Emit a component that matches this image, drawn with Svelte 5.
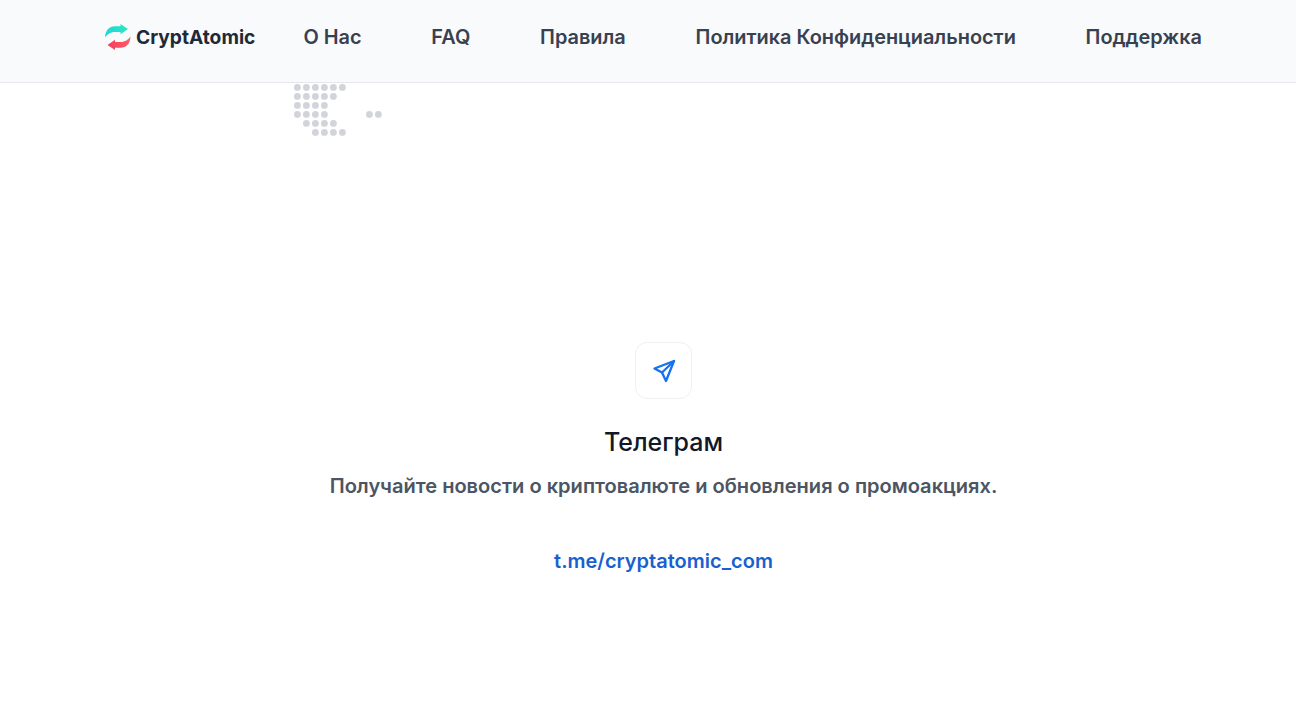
<script>
  const links = ['О Нас', 'FAQ', 'Правила', 'Политика Конфиденциальности', 'Поддержка'];
  const rows = [
    [0, 1, 2, 3, 4, 5],
    [0, 1, 2, 3, 4],
    [0, 1, 2, 3],
    [0, 1, 2, 3, 8, 9],
    [1, 2, 3, 4],
    [2, 3, 4, 5]
  ];
  const swoosh = 'M23 5L15.500 0V2.200H10C4 2.200 0.300 6.500 0 13.500C2 10.500 5.500 8 10 8H15.500V10.200Z';
</script>

<header class="bar">
  <a class="logo" href="#top">
    <svg width="26" height="26" viewBox="0 0 26 26" aria-hidden="true">
      <defs>
        <linearGradient id="g1" x1="0" y1="0" x2="1" y2="0"><stop offset="0" stop-color="#1fd6dc" /><stop offset="1" stop-color="#2ee6bd" /></linearGradient>
        <linearGradient id="g2" x1="0" y1="0" x2="1" y2="0"><stop offset="0" stop-color="#ff5b66" /><stop offset="1" stop-color="#f43f5e" /></linearGradient>
      </defs>
      <path d={swoosh} fill="url(#g1)" />
      <path d={swoosh} fill="url(#g2)" transform="rotate(180 12.750 13)" />
    </svg>
    <span>CryptAtomic</span>
  </a>
  <nav class="links">
    {#each links as link}
      <a href="#top">{link}</a>
    {/each}
  </nav>
</header>

<svg class="dots" width="90" height="54" viewBox="0 0 90 54" aria-hidden="true">
  {#each rows as row, y}
    {#each row as x}
      <circle cx={3.4 + x * 9} cy={3.4 + y * 9} r="3.400" fill="#d1d5db" />
    {/each}
  {/each}
</svg>

<main class="content">
  <div class="icon">
    <svg width="26" height="26" viewBox="0 0 26 26" fill="none" stroke="#1573ee" stroke-width="2.300" stroke-linejoin="round" stroke-linecap="round" aria-hidden="true">
      <path d="M23 3L3.500 10.500L11 14.500L15 23Z" />
      <path d="M11 14.500L23 3" />
    </svg>
  </div>
  <h1>Телеграм</h1>
  <p>Получайте новости о криптовалюте и обновления о промоакциях.</p>
  <a class="tg" href="#top">t.me/cryptatomic_com</a>
</main>

<style>
  :global(body) {
    margin: 0;
    background: #fff;
    font-family: Inter, "Noto Sans", sans-serif;
  }
  a {
    text-decoration: none;
  }
  .bar {
    display: flex;
    align-items: center;
    gap: 48px;
    height: 74px;
    padding: 0 0 8px 105px;
    background: #f9fafb;
    border-bottom: 1px solid #e5e7eb;
  }
  .logo {
    display: flex;
    align-items: center;
    gap: 5px;
    font-size: 19.200px;
    font-weight: 700;
    color: #1f2937;
  }
  .links {
    display: flex;
    gap: 69.800px;
  }
  .links a {
    font-size: 19.900px;
    font-weight: 600;
    color: #374151;
  }
  .dots {
    position: absolute;
    left: 294px;
    top: 84px;
  }
  .content {
    display: flex;
    flex-direction: column;
    align-items: center;
    padding: 259px 0 0 31px;
  }
  .icon {
    display: flex;
    align-items: center;
    justify-content: center;
    width: 57px;
    height: 57px;
    box-sizing: border-box;
    border: 1px solid #f0f0f2;
    border-radius: 12px;
  }
  h1 {
    margin: 27px 0 0;
    font-size: 25px;
    line-height: 32px;
    font-weight: 500;
    color: #111827;
  }
  p {
    margin: 13px 0 0;
    font-size: 20.060px;
    line-height: 30px;
    font-weight: 600;
    color: #4b5563;
  }
  .tg {
    margin-top: 45px;
    font-size: 20px;
    line-height: 30px;
    font-weight: 600;
    color: #1a5fd0;
  }
</style>
